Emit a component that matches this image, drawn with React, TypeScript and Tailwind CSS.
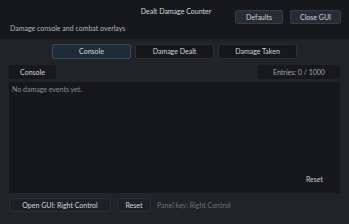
import React from 'react';

const tabs = ['Console', 'Damage Dealt', 'Damage Taken'];

const App: React.FC = () => {
  return (
    <div
      className="w-[349px] h-[224px] flex flex-col bg-[#222327] text-[#d4d6da] text-[7px] leading-none overflow-hidden"
      style={{ fontFamily: 'Lato, "Noto Sans", sans-serif' }}
    >
      <header className="h-[39px] shrink-0 bg-[#16181c] grid grid-cols-[minmax(0,1fr)_auto_minmax(0,1fr)] px-[8px]">
        <div className="col-start-1 row-start-1 self-end pb-[7px] pl-[2px] text-[#b4b7bc] whitespace-nowrap">
          Damage console and combat overlays
        </div>
        <div className="col-start-2 row-start-1 pt-[8px] pl-[3px] text-[#d8dadd] whitespace-nowrap">Dealt Damage Counter</div>
        <div className="col-start-3 row-start-1 flex justify-end gap-[7px] pt-[10px] self-start">
          <button className="w-[48px] h-[14px] bg-[#272c34] border border-[#363c46] rounded-[2px] text-[#d4d6da]">
            Defaults
          </button>
          <button className="w-[51px] h-[14px] bg-[#272c34] border border-[#363c46] rounded-[2px] text-[#d4d6da]">
            Close GUI
          </button>
        </div>
      </header>

      <div className="flex-1 flex flex-col px-[9px] pt-[5px]">
        <div className="flex justify-center gap-[4px]">
          {tabs.map((t, i) => (
            <button
              key={t}
              className={`w-[79px] h-[15px] rounded-[2px] border ${
                i === 0 ? 'bg-[#1e2b38] border-[#3a4d60] text-[#d8dadd]' : 'bg-[#16181c] border-[#2b2f36] text-[#d4d6da]'
              }`}
            >
              {t}
            </button>
          ))}
        </div>

        <div className="flex justify-between mt-[6px]">
          <div className="w-[47px] h-[14px] bg-[#18191c] flex items-center justify-center text-[#d4d6da]">Console</div>
          <div className="w-[82px] h-[14px] bg-[#18191c] flex items-center justify-center text-[#a4a7ac]">
            Entries: 0 / 1000
          </div>
        </div>

        <div className="mt-[3px] h-[111px] bg-[#17181b] flex flex-col justify-between px-[3px] pt-[4px] pb-[10px]">
          <div className="text-[#8b8e93]">No damage events yet.</div>
          <div className="self-end pr-[14px] text-[#c8cacd]">Reset</div>
        </div>

        <div className="flex items-center mt-[5px] gap-[6px]">
          <button className="w-[102px] h-[14px] bg-[#1c2128] border border-[#2a3039] rounded-[2px] text-[#d4d6da]">
            Open GUI: Right Control
          </button>
          <button className="w-[34px] h-[14px] bg-[#1c2128] border border-[#2a3039] rounded-[2px] text-[#d4d6da]">
            Reset
          </button>
          <span className="text-[#6f7278] whitespace-nowrap">Panel key: Right Control</span>
        </div>
      </div>
    </div>
  );
};

export default App;
